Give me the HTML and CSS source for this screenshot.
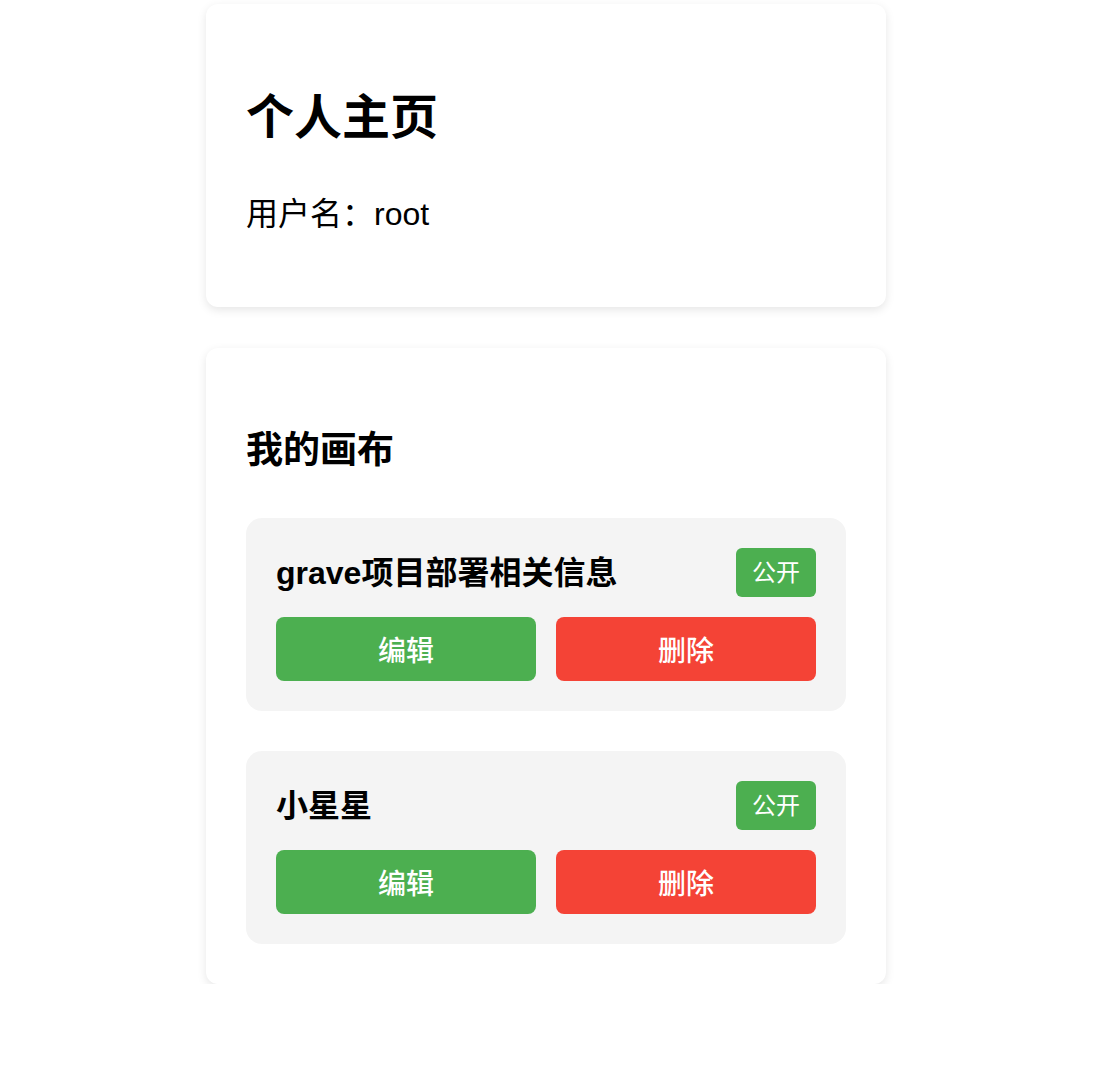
FILE: index.html
```html
<!DOCTYPE html>
<html lang="zh">
<head>
<meta charset="utf-8">
<title>个人主页</title>
<link rel="stylesheet" href="styles.css">
</head>
<body>
<main class="page">
  <section class="card">
    <h1 class="page-title">个人主页</h1>
    <p class="username">用户名：root</p>
  </section>
  <section class="card">
    <h2 class="section-title">我的画布</h2>
    <div class="canvas-list">
      <div class="canvas-item">
        <div class="canvas-head">
          <span class="canvas-name">grave项目部署相关信息</span>
          <span class="badge">公开</span>
        </div>
        <div class="canvas-actions">
          <button class="btn btn-edit">编辑</button>
          <button class="btn btn-delete">删除</button>
        </div>
      </div>
      <div class="canvas-item">
        <div class="canvas-head">
          <span class="canvas-name">小星星</span>
          <span class="badge">公开</span>
        </div>
        <div class="canvas-actions">
          <button class="btn btn-edit">编辑</button>
          <button class="btn btn-delete">删除</button>
        </div>
      </div>
    </div>
  </section>
</main>
</body>
</html>
```

FILE: styles.css
```css
* { box-sizing: border-box; }
html, body { margin: 0; padding: 0; background: #fff; }
body {
  font-family: "Liberation Sans", "Noto Sans CJK SC", sans-serif;
  color: #000;
  padding-right: 4px;
}
.page {
  width: 680px;
  margin: 0 auto;
  padding-top: 4px;
  display: flex;
  flex-direction: column;
  gap: 41px;
}
.card {
  background: #fff;
  border-radius: 12px;
  box-shadow: 0 3px 10px rgba(0, 0, 0, 0.1);
  padding: 40px;
}
.page-title {
  font-size: 48px;
  font-weight: 700;
  line-height: 67px;
  margin: 40px 0 0;
}
.username {
  font-size: 32px;
  line-height: 46px;
  margin: 40px 0 30px;
}
.section-title {
  font-size: 37px;
  font-weight: 700;
  line-height: 50px;
  margin: 38px 0 42px;
}
.canvas-list {
  display: flex;
  flex-direction: column;
  gap: 40px;
}
.canvas-item {
  background: #f4f4f4;
  border-radius: 16px;
  padding: 30px;
  display: flex;
  flex-direction: column;
  gap: 20px;
}
.canvas-head {
  display: flex;
  justify-content: space-between;
  align-items: center;
}
.canvas-name {
  font-size: 32px;
  font-weight: 700;
  line-height: 46px;
}
.badge {
  background: #4caf50;
  color: #fff;
  font-size: 24px;
  line-height: 33px;
  padding: 8px 16px;
  border-radius: 6px;
}
.canvas-actions {
  display: grid;
  grid-template-columns: 1fr 1fr;
  gap: 20px;
}
.btn {
  height: 64px;
  border: none;
  border-radius: 8px;
  color: #fff;
  font-family: "Noto Sans CJK SC", sans-serif;
  font-size: 28px;
  font-weight: 500;
  cursor: pointer;
}
.btn-edit { background: #4caf50; }
.btn-delete { background: #f44336; }
```
